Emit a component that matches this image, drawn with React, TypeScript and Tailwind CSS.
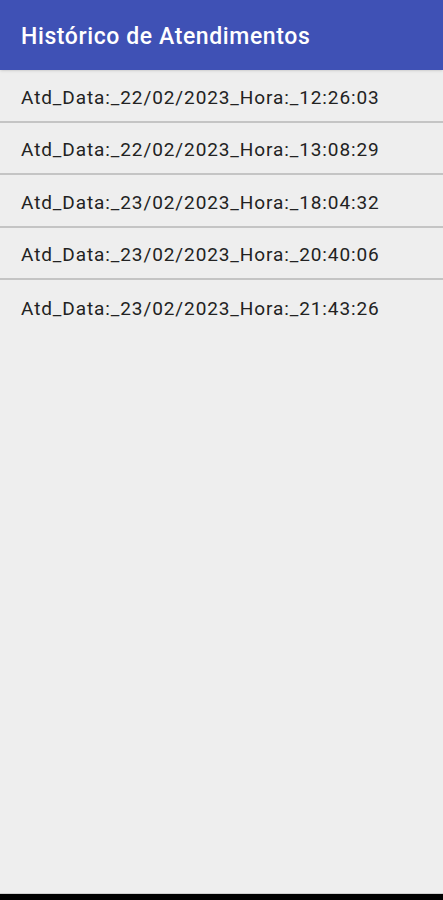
const atendimentos = [
  "Atd_Data:_22/02/2023_Hora:_12:26:03",
  "Atd_Data:_22/02/2023_Hora:_13:08:29",
  "Atd_Data:_23/02/2023_Hora:_18:04:32",
  "Atd_Data:_23/02/2023_Hora:_20:40:06",
  "Atd_Data:_23/02/2023_Hora:_21:43:26",
];

export default function App() {
  return (
    <div className="h-[900px] flex flex-col bg-[#eeeeee] font-['Roboto',sans-serif]">
      <header className="h-[70px] shrink-0 bg-[#3f51b5] flex items-center px-[21px] pt-[4px] shadow-sm">
        <h1 className="text-white text-[23px] font-medium tracking-[0.6px]">
          Histórico de Atendimentos
        </h1>
      </header>

      <ul className="flex-1">
        {atendimentos.map((item, i) => (
          <li
            key={i}
            className="h-[52.5px] flex items-center px-[21px] pt-[5px] text-[19px] tracking-[0.9px] text-[#222222] border-b-2 border-[#c4c4c4] last:border-b-0"
          >
            {item}
          </li>
        ))}
      </ul>

      <div className="h-[7px] shrink-0 bg-black border-t border-[#cfcfcf]" />
    </div>
  );
}
